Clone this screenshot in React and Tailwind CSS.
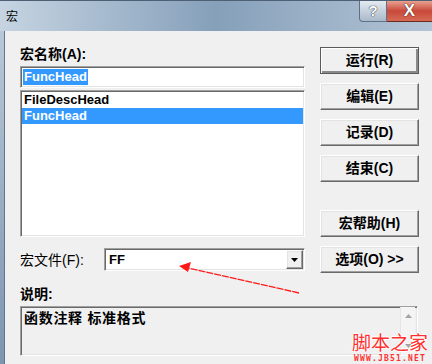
const sunken =
  'border border-t-[#a0a0a0] border-l-[#a0a0a0] border-r-white border-b-white shadow-[inset_1px_1px_0_#696969,inset_-1px_-1px_0_#e3e3e3]';
const raised =
  'border border-t-white border-l-white border-r-[#696969] border-b-[#696969] shadow-[inset_-1px_-1px_0_#a0a0a0,inset_1px_1px_0_#e3e3e3] bg-[#f0f0f0]';

const cjk = { fontFamily: '"Liberation Sans", "Noto Sans CJK SC", sans-serif' };

function DlgButton({ label, isDefault, className = '' }) {
  return (
    <div
      className={`h-[27px] w-[99px] flex items-center justify-center text-[14px] font-bold text-black ${
        isDefault
          ? 'border border-[#5a5a5a] bg-[#f0f0f0] shadow-[inset_1px_1px_0_#ffffff,inset_-2px_-2px_0_#8a8a8a]'
          : raised
      } ${className}`}
    >
      {label}
    </div>
  );
}

export default function App() {
  return (
    <div className="w-[432px] h-[364px] overflow-hidden relative flex flex-col bg-[#f0f0f0]" style={cjk}>
      {/* title bar */}
      <div className="h-[31px] shrink-0 relative flex items-start border-t border-[#4d6074] bg-gradient-to-r from-[#c6d4e2] via-[#86a0ba] to-[#b3c4d5]">
        <span className="ml-[6px] mt-[9px] text-[12px] leading-[14px] text-black">宏</span>
        <div className="ml-auto flex h-[21px]">
          <div className="w-[28px] h-full flex items-center justify-center rounded-bl-[4px] border border-t-0 border-[#5f7186] bg-gradient-to-b from-[#e4eaf1] to-[#a9b9ca] text-white font-bold text-[15px] [text-shadow:0_0_1px_#202830,0_0_1px_#202830]">
            ?
          </div>
          <div className="w-[45px] h-full flex items-center justify-center border-b border-[#6a2a22] bg-gradient-to-b from-[#e8a090] via-[#c9483a] to-[#d66a55] text-white font-bold text-[17px] [text-shadow:0_0_1px_#3a1410,0_0_1px_#3a1410]">
            X
          </div>
        </div>
      </div>

      <div className="flex flex-1 min-h-0">
        {/* left window frame */}
        <div className="w-[4px] shrink-0 bg-gradient-to-b from-[#b9c8d7] to-[#7d95b0]" />
        <div className="w-px shrink-0 bg-[#62768b]" />

        {/* client area */}
        <div className="flex-1 pl-[15px] pt-[15px] flex flex-col text-black">
          <div className="flex">
            {/* left column */}
            <div className="w-[285px] flex flex-col">
              <div className="text-[14px] leading-[16px] font-bold">宏名称(A):</div>
              <div className={`mt-[4px] h-[22px] bg-white flex items-center px-[2px] ${sunken}`}>
                <span className="bg-[#3399ff] text-white text-[13px] font-bold leading-[16px] px-[1px]">FuncHead</span>
              </div>
              <div className={`mt-[2px] h-[147px] bg-white flex flex-col p-[1px] ${sunken}`}>
                <div className="h-[16px] pl-[2px] text-[13px] font-bold leading-[16px]">FileDescHead</div>
                <div className="h-[16px] pl-[2px] text-[13px] font-bold leading-[16px] bg-[#3399ff] text-white">FuncHead</div>
              </div>
              <div className="mt-[11px] flex items-center h-[23px]">
                <span className="w-[84px] text-[14px] leading-[16px]">宏文件(F):</span>
                <div className={`flex-1 h-full bg-white flex items-center ${sunken} p-[1px]`}>
                  <span className="flex-1 pl-[3px] text-[13px] font-bold">FF</span>
                  <div className={`w-[17px] h-full flex items-center justify-center ${raised}`}>
                    <svg width="7" height="4" viewBox="0 0 7 4">
                      <path d="M0 0h7L3.5 4z" fill="#000" />
                    </svg>
                  </div>
                </div>
              </div>
            </div>

            {/* right column */}
            <div className="ml-[15px] mt-[1px] flex flex-col gap-[9px]">
              <DlgButton label="运行(R)" isDefault />
              <DlgButton label="编辑(E)" />
              <DlgButton label="记录(D)" />
              <DlgButton label="结束(C)" />
              <DlgButton label="宏帮助(H)" className="mt-[19px]" />
              <DlgButton label="选项(O) >>" />
            </div>
          </div>

          <div className="mt-[13px] text-[14px] leading-[16px] font-bold">说明:</div>
          <div className={`mt-[4px] h-[50px] w-[398px] flex ${sunken} bg-[#f0f0f0]`}>
            <div className="flex-1 pl-[3px] pt-[3px] text-[14px] leading-[16px] font-bold tracking-[0.7px]">
              函数注释 标准格式
            </div>
            <div className="w-[15px] flex flex-col justify-between items-center py-[7px] mr-[2px] bg-[#f4f4f4] border-l border-[#e6e6e6]">
              <svg width="7" height="4" viewBox="0 0 7 4">
                <path d="M0 4h7L3.5 0z" fill="#a3a3a3" />
              </svg>
              <svg width="7" height="4" viewBox="0 0 7 4">
                <path d="M0 0h7L3.5 4z" fill="#a3a3a3" />
              </svg>
            </div>
          </div>
        </div>
      </div>

      {/* annotation arrow */}
      <svg className="absolute left-0 top-0 pointer-events-none" width="432" height="364">
        <line x1="299" y1="293" x2="188" y2="268" stroke="#ff1a1a" strokeWidth="1.3" strokeDasharray="7 1" />
        <path d="M179 266 L191 262 L188 272 Z" fill="#ff1a1a" />
      </svg>

      {/* watermark */}
      <div className="absolute left-[352px] top-[332px] flex flex-col items-center">
        <span
          className="text-[19px] leading-[19px] text-[#ff3030] [text-shadow:1px_0_0_#fff,-1px_0_0_#fff,0_1px_0_#fff,0_-1px_0_#fff]"
          style={{ fontFamily: '"Noto Sans CJK SC", sans-serif' }}
        >
          脚本之家
        </span>
        <span
          className="mt-[4px] text-[8px] leading-[8px] text-[#ff3030] tracking-[1.2px] font-bold"
          style={{ fontFamily: '"DejaVu Sans Mono", monospace' }}
        >
          WWW.JB51.NET
        </span>
      </div>
    </div>
  );
}
